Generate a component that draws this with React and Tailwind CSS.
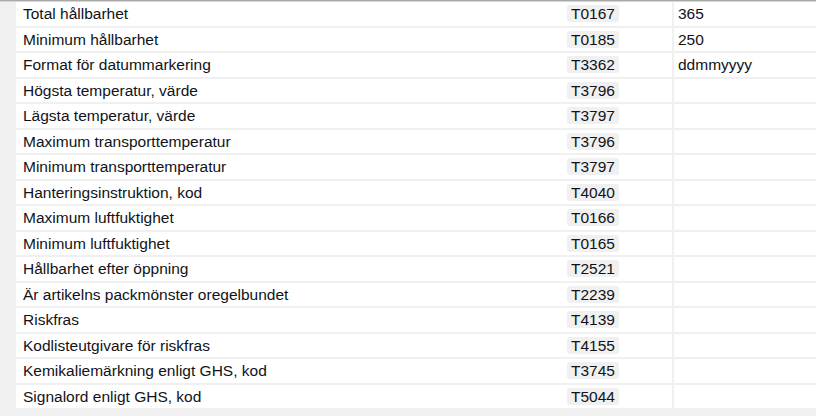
import React from 'react';

const rader = [
  { namn: 'Total hållbarhet', kod: 'T0167', varde: '365' },
  { namn: 'Minimum hållbarhet', kod: 'T0185', varde: '250' },
  { namn: 'Format för datummarkering', kod: 'T3362', varde: 'ddmmyyyy' },
  { namn: 'Högsta temperatur, värde', kod: 'T3796', varde: '' },
  { namn: 'Lägsta temperatur, värde', kod: 'T3797', varde: '' },
  { namn: 'Maximum transporttemperatur', kod: 'T3796', varde: '' },
  { namn: 'Minimum transporttemperatur', kod: 'T3797', varde: '' },
  { namn: 'Hanteringsinstruktion, kod', kod: 'T4040', varde: '' },
  { namn: 'Maximum luftfuktighet', kod: 'T0166', varde: '' },
  { namn: 'Minimum luftfuktighet', kod: 'T0165', varde: '' },
  { namn: 'Hållbarhet efter öppning', kod: 'T2521', varde: '' },
  { namn: 'Är artikelns packmönster oregelbundet', kod: 'T2239', varde: '' },
  { namn: 'Riskfras', kod: 'T4139', varde: '' },
  { namn: 'Kodlisteutgivare för riskfras', kod: 'T4155', varde: '' },
  { namn: 'Kemikaliemärkning enligt GHS, kod', kod: 'T3745', varde: '' },
  { namn: 'Signalord enligt GHS, kod', kod: 'T5044', varde: '' },
];

const App = () => {
  return (
    <div className="w-[816px] h-[416px] overflow-hidden bg-[#f0f0f0] font-['Liberation_Sans',Arial,sans-serif] text-[15.5px] text-[#111318]">
      {/* Övre kant */}
      <div className="h-[1px] bg-[#a9a9a9]" />
      <div className="h-[1px] bg-[#d4d4d4]" />

      {/* Tabell */}
      <div className="ml-[16px] bg-white">
        {rader.map((rad, i) => (
          <div key={i} className="flex h-[25.5px] border-b-2 border-[#f0f0f0]">
            <div className="w-[544px] flex items-center pl-[7px] whitespace-nowrap">
              {rad.namn}
            </div>
            <div className="w-[112px] flex items-center pl-[7px]">
              <span className="h-[17px] flex items-center px-[4px] rounded-[3px] bg-[#f0f0f0] leading-none">
                {rad.kod}
              </span>
            </div>
            <div className="w-[2px] bg-[#f0f0f0]" />
            <div className="flex-1 flex items-center pl-[4px]">{rad.varde}</div>
          </div>
        ))}
      </div>
    </div>
  );
};

export default App;
